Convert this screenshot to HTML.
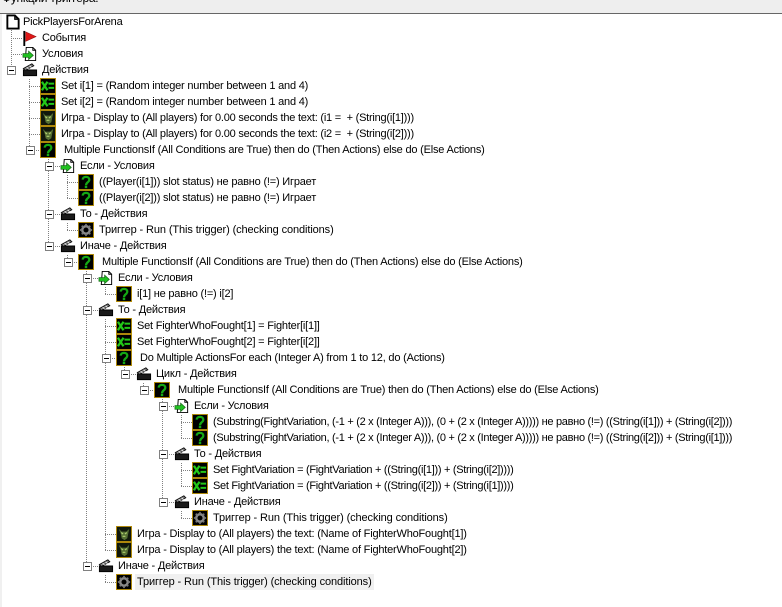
<!DOCTYPE html>
<html><head><meta charset="utf-8">
<style>
html,body{margin:0;padding:0;background:#fff;width:782px;height:607px;overflow:hidden}
body{position:relative;font-family:"Liberation Sans",sans-serif;font-size:11px;letter-spacing:-.2px;color:#000}
#top{position:absolute;left:0;top:0;width:782px;height:13px;background:#eee;border-bottom:1px solid #666;overflow:hidden}
#top span{position:absolute;left:2px;top:-9px;font-size:12px;letter-spacing:-.3px;white-space:nowrap}
#side{position:absolute;left:0;top:14px;width:2px;height:593px;background:#f0f0f0}
.t{position:absolute;white-space:nowrap;height:16px;line-height:16px;margin-top:1px}
.s{letter-spacing:-.295px}
.r{letter-spacing:-.11px}
.i{position:absolute;width:16px;height:16px;margin-top:1px}
.m{position:absolute;width:7px;height:7px;border:1px solid #808080;background:#fff;margin:2px 0 0 1px}
.m::after{content:"";position:absolute;left:1px;top:3px;width:5px;height:1px;background:#000}
svg#l{position:absolute;left:0;top:1px}
</style></head><body>
<svg width="0" height="0" style="position:absolute">
<symbol id="set" viewBox="0 0 17 17"><rect x=".5" y=".5" width="16" height="16" fill="#000" stroke="#b8900c"/><path d="M2 4l6 9M8 4l-6 9" stroke="#22c818" stroke-width="2.4" fill="none"/><path d="M9 6h6M9 10.500h6" stroke="#22c818" stroke-width="2.2"/></symbol>
<symbol id="q" viewBox="0 0 17 17"><rect x=".5" y=".5" width="16" height="16" fill="#000" stroke="#b8900c"/><path d="M5 6c0-4 7-4 7 0 0 3-3.500 2.500-3.500 6" stroke="#14a814" stroke-width="2.400" fill="none"/><rect x="7.200" y="12.500" width="2.600" height="2.500" fill="#14a814"/></symbol>
<symbol id="g" viewBox="0 0 17 17"><rect x=".5" y=".5" width="16" height="16" fill="#10180c" stroke="#b8900c"/><path d="M3 3l3 3h5l3-3-1 5-1 5-3 2-3-2-1-5z" fill="#556f34"/><path d="M5.500 7l2 1.500M11.500 7l-2 1.500M7 11h3" stroke="#b0d070" stroke-width="1.200"/></symbol>
<symbol id="r" viewBox="0 0 17 17"><rect x=".5" y=".5" width="16" height="16" fill="#000" stroke="#b8900c"/><circle cx="8.500" cy="8.500" r="4" fill="none" stroke="#8a8a8a" stroke-width="2.600"/><path d="M8.500 2v13M2 8.500h13M4 4l9 9M13 4l-9 9" stroke="#777" stroke-width="1.800" stroke-dasharray="2.500 8"/></symbol>
<symbol id="c" viewBox="0 0 17 17"><path d="M1.500 8.500h14v6h-14z" fill="#1a1a1a" stroke="#000"/><path d="M1.500 7l9-5 2 2-9 5z" fill="#888" stroke="#111"/><path d="M5 5.500l2 2M8 4l2 2" stroke="#eee"/></symbol>
<symbol id="u" viewBox="0 0 17 17"><path d="M4.500 1.500h7l3 3v11h-11z" fill="#fff" stroke="#000"/><path d="M11.500 1.500v3h3" fill="none" stroke="#000"/><path d="M1 8h6V5.500l5 4.500-5 4.500V12H1z" fill="#20c020" stroke="#106010" stroke-width=".7"/></symbol>
<symbol id="f" viewBox="0 0 17 17"><path d="M3.500 1v16" stroke="#000" stroke-width="2"/><path d="M5 2l11 5-11 5z" fill="#e01818" stroke="#901010" stroke-width=".6"/></symbol>
<symbol id="d" viewBox="0 0 17 17"><path d="M2.500 1.500h8l4 4v10h-12z" fill="#fff" stroke="#000" stroke-width="2"/><path d="M10.500 1.500v4h4" fill="none" stroke="#000" stroke-width="1.500"/></symbol>
</svg>
<div id="top"><span>Функции триггера:</span></div>
<div id="side"></div>
<svg id="l" width="782" height="607"><g stroke="#808080" stroke-dasharray="1 1" fill="none" shape-rendering="crispEdges">
<path d="M11.500 29v36M11 37.500h11M11 53.500h11"/>
<path d="M29.500 78v67M29 85.500h11M29 101.500h11M29 117.500h11M29 133.500h11M34 149.500h6"/>
<path d="M48.500 158v83M53 165.500h7M53 213.500h7M53 245.500h7"/>
<path d="M67.500 174v23.500M67 181.500h11M67 197.500h11M67.500 222v7.500M67 229.500h11M67.500 254v3M72 261.500h6"/>
<path d="M86.500 270v291M91 277.500h7M91 309.500h7M91 565.500h7"/>
<path d="M105.500 286v7.500M105 293.500h11"/>
<path d="M105.500 318v231.500M105 325.500h11M105 341.500h11M110 357.500h6M105 533.500h11M105 549.500h11"/>
<path d="M124.500 366v3M129 373.500h7M143.500 382v3M148 389.500h6"/>
<path d="M162.500 398v99M167 405.500h7M167 453.500h7M167 501.500h7"/>
<path d="M181.500 414v23.500M181 421.500h11M181 437.500h11M181.500 462v23.500M181 469.500h11M181 485.500h11M181.500 510v7.500M181 517.500h11"/>
<path d="M105.500 574v7.500M105 581.500h11"/>
</g></svg>

<svg class="i" style="left:5px;top:13px"><use href="#d"/></svg><div class="t" style="left:23px;top:13px">PickPlayersForArena</div>
<svg class="i" style="left:21px;top:29px"><use href="#f"/></svg><div class="t" style="left:42px;top:29px">События</div>
<svg class="i" style="left:22px;top:45px"><use href="#u"/></svg><div class="t" style="left:42px;top:45px">Условия</div>
<div class="m" style="left:6px;top:64px"></div><svg class="i" style="left:22px;top:61px"><use href="#c"/></svg><div class="t" style="left:42px;top:61px">Действия</div>

<svg class="i" style="left:40px;top:77px"><use href="#set"/></svg><div class="t" style="left:61px;top:77px">Set i[1] = (Random integer number between 1 and 4)</div>
<svg class="i" style="left:40px;top:93px"><use href="#set"/></svg><div class="t" style="left:61px;top:93px">Set i[2] = (Random integer number between 1 and 4)</div>
<svg class="i" style="left:40px;top:109px"><use href="#g"/></svg><div class="t" style="left:61px;top:109px;letter-spacing:-.23px">Игра - Display to (All players) for 0.00 seconds the text: (i1 =&nbsp; + (String(i[1])))</div>
<svg class="i" style="left:40px;top:125px"><use href="#g"/></svg><div class="t" style="left:61px;top:125px;letter-spacing:-.23px">Игра - Display to (All players) for 0.00 seconds the text: (i2 =&nbsp; + (String(i[2])))</div>
<div class="m" style="left:25px;top:144px"></div><svg class="i" style="left:40px;top:141px"><use href="#q"/></svg><div class="t" style="left:64px;top:141px">Multiple FunctionsIf (All Conditions are True) then do (Then Actions) else do (Else Actions)</div>

<div class="m" style="left:44px;top:160px"></div><svg class="i" style="left:60px;top:157px"><use href="#u"/></svg><div class="t" style="left:80px;top:157px">Если - Условия</div>
<svg class="i" style="left:78px;top:173px"><use href="#q"/></svg><div class="t" style="left:99px;top:173px">((Player(i[1])) slot status) не равно (!=) Играет</div>
<svg class="i" style="left:78px;top:189px"><use href="#q"/></svg><div class="t" style="left:99px;top:189px">((Player(i[2])) slot status) не равно (!=) Играет</div>
<div class="m" style="left:44px;top:208px"></div><svg class="i" style="left:60px;top:205px"><use href="#c"/></svg><div class="t" style="left:80px;top:205px">То - Действия</div>
<svg class="i" style="left:78px;top:221px"><use href="#r"/></svg><div class="t r" style="left:99px;top:221px">Триггер - Run (This trigger) (checking conditions)</div>
<div class="m" style="left:44px;top:240px"></div><svg class="i" style="left:60px;top:237px"><use href="#c"/></svg><div class="t" style="left:80px;top:237px">Иначе - Действия</div>
<div class="m" style="left:63px;top:256px"></div><svg class="i" style="left:78px;top:253px"><use href="#q"/></svg><div class="t" style="left:102px;top:253px">Multiple FunctionsIf (All Conditions are True) then do (Then Actions) else do (Else Actions)</div>

<div class="m" style="left:82px;top:272px"></div><svg class="i" style="left:98px;top:269px"><use href="#u"/></svg><div class="t" style="left:118px;top:269px">Если - Условия</div>
<svg class="i" style="left:116px;top:285px"><use href="#q"/></svg><div class="t" style="left:137px;top:285px">i[1] не равно (!=) i[2]</div>
<div class="m" style="left:82px;top:304px"></div><svg class="i" style="left:98px;top:301px"><use href="#c"/></svg><div class="t" style="left:118px;top:301px">То - Действия</div>
<svg class="i" style="left:116px;top:317px"><use href="#set"/></svg><div class="t" style="left:137px;top:317px">Set FighterWhoFought[1] = Fighter[i[1]]</div>
<svg class="i" style="left:116px;top:333px"><use href="#set"/></svg><div class="t" style="left:137px;top:333px">Set FighterWhoFought[2] = Fighter[i[2]]</div>
<div class="m" style="left:101px;top:352px"></div><svg class="i" style="left:116px;top:349px"><use href="#q"/></svg><div class="t" style="left:140px;top:349px">Do Multiple ActionsFor each (Integer A) from 1 to 12, do (Actions)</div>
<div class="m" style="left:120px;top:368px"></div><svg class="i" style="left:136px;top:365px"><use href="#c"/></svg><div class="t" style="left:156px;top:365px">Цикл - Действия</div>
<div class="m" style="left:139px;top:384px"></div><svg class="i" style="left:154px;top:381px"><use href="#q"/></svg><div class="t" style="left:178px;top:381px">Multiple FunctionsIf (All Conditions are True) then do (Then Actions) else do (Else Actions)</div>
<div class="m" style="left:158px;top:400px"></div><svg class="i" style="left:174px;top:397px"><use href="#u"/></svg><div class="t" style="left:194px;top:397px">Если - Условия</div>
<svg class="i" style="left:192px;top:413px"><use href="#q"/></svg><div class="t s" style="left:213px;top:413px">(Substring(FightVariation, (-1 + (2 x (Integer A))), (0 + (2 x (Integer A))))) не равно (!=) ((String(i[1])) + (String(i[2])))</div>
<svg class="i" style="left:192px;top:429px"><use href="#q"/></svg><div class="t s" style="left:213px;top:429px">(Substring(FightVariation, (-1 + (2 x (Integer A))), (0 + (2 x (Integer A))))) не равно (!=) ((String(i[2])) + (String(i[1])))</div>
<div class="m" style="left:158px;top:448px"></div><svg class="i" style="left:174px;top:445px"><use href="#c"/></svg><div class="t" style="left:194px;top:445px">То - Действия</div>
<svg class="i" style="left:192px;top:461px"><use href="#set"/></svg><div class="t s" style="left:213px;top:461px">Set FightVariation = (FightVariation + ((String(i[1])) + (String(i[2]))))</div>
<svg class="i" style="left:192px;top:477px"><use href="#set"/></svg><div class="t s" style="left:213px;top:477px">Set FightVariation = (FightVariation + ((String(i[2])) + (String(i[1]))))</div>
<div class="m" style="left:158px;top:496px"></div><svg class="i" style="left:174px;top:493px"><use href="#c"/></svg><div class="t" style="left:194px;top:493px">Иначе - Действия</div>
<svg class="i" style="left:192px;top:509px"><use href="#r"/></svg><div class="t r" style="left:213px;top:509px">Триггер - Run (This trigger) (checking conditions)</div>
<svg class="i" style="left:116px;top:525px"><use href="#g"/></svg><div class="t" style="left:137px;top:525px">Игра - Display to (All players) the text: (Name of FighterWhoFought[1])</div>
<svg class="i" style="left:116px;top:541px"><use href="#g"/></svg><div class="t" style="left:137px;top:541px">Игра - Display to (All players) the text: (Name of FighterWhoFought[2])</div>
<div class="m" style="left:82px;top:560px"></div><svg class="i" style="left:98px;top:557px"><use href="#c"/></svg><div class="t" style="left:118px;top:557px">Иначе - Действия</div>
<svg class="i" style="left:116px;top:573px"><use href="#r"/></svg><div class="t r" style="left:135px;top:573px;padding:0 2px;background:#f0f0f0">Триггер - Run (This trigger) (checking conditions)</div>
</body></html>
